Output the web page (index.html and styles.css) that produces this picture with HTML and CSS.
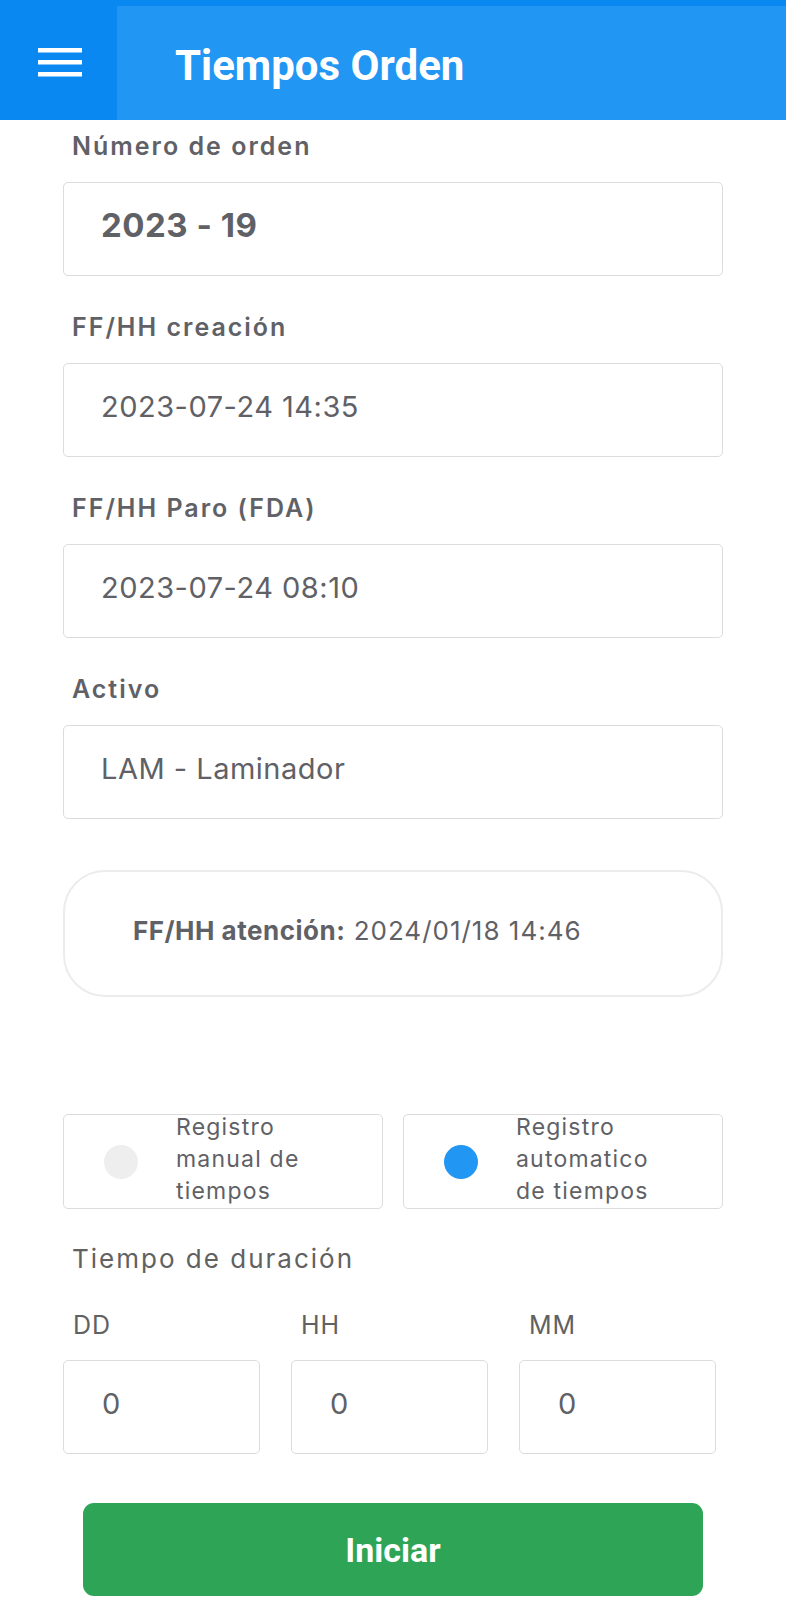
FILE: index.html
```html
<!DOCTYPE html>
<html lang="es">
<head>
<meta charset="utf-8">
<title>Tiempos Orden</title>
<link rel="stylesheet" href="styles.css">
</head>
<body>
<header class="appbar">
  <div class="menu-btn">
    <svg width="44" height="29" viewBox="0 0 44 29" aria-hidden="true">
      <rect x="0" y="0" width="44" height="4.5" fill="#fff"/>
      <rect x="0" y="12" width="44" height="4.5" fill="#fff"/>
      <rect x="0" y="24" width="44" height="4.5" fill="#fff"/>
    </svg>
  </div>
  <h1 class="title">Tiempos Orden</h1>
</header>

<main class="form">
  <div class="field">
    <label class="label">Número de orden</label>
    <div class="input input-bold">2023 - 19</div>
  </div>
  <div class="field">
    <label class="label">FF/HH creación</label>
    <div class="input">2023-07-24 14:35</div>
  </div>
  <div class="field">
    <label class="label">FF/HH Paro (FDA)</label>
    <div class="input">2023-07-24 08:10</div>
  </div>
  <div class="field">
    <label class="label">Activo</label>
    <div class="input">LAM - Laminador</div>
  </div>

  <div class="card">
    <p class="card-line"><span class="card-key">FF/HH atención:</span> 2024/01/18 14:46</p>
  </div>

  <div class="radios">
    <div class="radio">
      <span class="dot"></span>
      <span class="radio-text">Registro manual de tiempos</span>
    </div>
    <div class="radio">
      <span class="dot dot-on"></span>
      <span class="radio-text">Registro automatico de tiempos</span>
    </div>
  </div>

  <div class="duration-title">Tiempo de duración</div>

  <div class="duration">
    <div class="dur-col">
      <div class="dur-label">DD</div>
      <div class="input dur-input">0</div>
    </div>
    <div class="dur-col">
      <div class="dur-label">HH</div>
      <div class="input dur-input">0</div>
    </div>
    <div class="dur-col">
      <div class="dur-label">MM</div>
      <div class="input dur-input">0</div>
    </div>
  </div>

  <button class="btn">Iniciar</button>
</main>
</body>
</html>
```
FILE: styles.css
```css
* { box-sizing: border-box; }
html, body { margin: 0; padding: 0; background: #fff; }
body {
  font-family: Inter, "Open Sans", sans-serif;
  color: #616161;
  width: 786px;
}
.appbar {
  display: flex;
  align-items: center;
  height: 120px;
  background: #2196f3;
  border-top: 6px solid #0a88f2;
}
.menu-btn {
  width: 117px;
  height: 120px;
  margin-top: -6px;
  background: #0a88f2;
  display: flex;
  align-items: center;
  justify-content: center;
  padding-top: 4px;
  padding-left: 3px;
}
.title {
  margin: 6px 0 0 58px;
  font-family: Roboto, sans-serif;
  font-weight: 700;
  font-size: 42px;
  line-height: 50px;
  color: #fff;
}
.form {
  padding: 11px 63px 0 63px;
}
.field { margin-bottom: 36px; }
.field:last-of-type { margin-bottom: 0; }
.label {
  display: block;
  padding-left: 9px;
  font-size: 25px;
  line-height: 30px;
  font-weight: 600;
  letter-spacing: 2px;
  color: #5f6166;
  margin-bottom: 21px;
}
.input {
  height: 94px;
  border: 1.5px solid #dcdcdc;
  border-radius: 5px;
  display: flex;
  align-items: center;
  padding-left: 37px;
  padding-bottom: 8px;
  font-size: 29px;
  letter-spacing: 0.5px;
  color: #5f6166;
}
.input-bold { font-weight: 700; font-size: 33px; }
.card {
  margin-top: 51px;
  height: 127px;
  border: 2px solid #ececec;
  border-radius: 42px;
  display: flex;
  align-items: center;
  padding-left: 68px;
  padding-bottom: 6px;
}
.card-line {
  margin: 0;
  font-size: 26px;
  letter-spacing: 1px;
  color: #5f6166;
}
.card-key { font-weight: 700; letter-spacing: 0.5px; }
.radios {
  margin-top: 117px;
  display: grid;
  grid-template-columns: 320px 320px;
  gap: 20px;
}
.radio {
  height: 95px;
  border: 1.5px solid #dcdcdc;
  border-radius: 5px;
  display: flex;
  align-items: center;
  padding-left: 40px;
}
.dot {
  flex: none;
  width: 34px;
  height: 34px;
  border-radius: 50%;
  background: #eeeeee;
  margin-right: 38px;
}
.dot-on { background: #2196f3; }
.radio-text {
  width: 150px;
  margin-top: -6px;
  font-size: 23px;
  line-height: 32px;
  letter-spacing: 1.2px;
  color: #5f6166;
}
.duration-title {
  margin-top: 35px;
  padding-left: 9px;
  font-size: 26px;
  line-height: 30px;
  letter-spacing: 2px;
}
.duration {
  margin-top: 36px;
  display: grid;
  grid-template-columns: 197px 197px 197px;
  column-gap: 31px;
}
.dur-label {
  padding-left: 10px;
  font-size: 25px;
  line-height: 30px;
  letter-spacing: 1px;
  margin-bottom: 20px;
}
.dur-input { padding-left: 38px; }
.btn {
  display: flex;
  align-items: center;
  justify-content: center;
  margin: 49px 20px 0 20px;
  width: 620px;
  height: 93px;
  border: none;
  border-radius: 11px;
  background: #2ea556;
  color: #fff;
  font-family: Roboto, sans-serif;
  font-weight: 700;
  font-size: 34px;
}
```
